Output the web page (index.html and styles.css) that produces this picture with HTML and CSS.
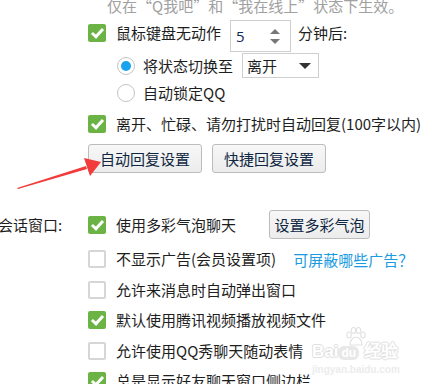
FILE: index.html
```html
<!DOCTYPE html>
<html lang="zh-CN">

<head>
    <meta charset="UTF-8">
    <meta name="viewport" content="width=device-width, initial-scale=1.0">
    <title>会话窗口设置</title>
    <link rel="stylesheet" href="styles.css">
</head>

<body>
    <div class="panel">
        <p class="note">仅在“Q我吧”和“我在线上”状态下生效。</p>

        <div class="group">
            <div class="row row-idle">
                <span class="check on"></span>
                <span class="label">鼠标键盘无动作</span>
                <div class="spin">
                    <span class="spin-value">5</span>
                    <span class="spin-arrows">
                        <span class="tri up"></span>
                        <span class="tri down"></span>
                    </span>
                </div>
                <span class="label after">分钟后:</span>
            </div>
            <div class="row row-radio first">
                <span class="radio on"></span>
                <span class="label">将状态切换至</span>
                <div class="select">
                    <span>离开</span>
                    <span class="tri down dark"></span>
                </div>
            </div>
            <div class="row row-radio second">
                <span class="radio"></span>
                <span class="label">自动锁定QQ</span>
            </div>
            <div class="row row-reply">
                <span class="check on"></span>
                <span class="label">离开、忙碌、请勿打扰时自动回复(100字以内)</span>
            </div>
            <div class="buttons">
                <button class="btn wide">自动回复设置</button>
                <button class="btn wide">快捷回复设置</button>
            </div>
        </div>

        <div class="section">
            <div class="section-title">会话窗口:</div>
            <div class="section-body">
                <div class="row row-head">
                    <span class="check on"></span>
                    <span class="label">使用多彩气泡聊天</span>
                    <button class="btn bubble">设置多彩气泡</button>
                </div>
                <div class="row item">
                    <span class="check"></span>
                    <span class="label">不显示广告(会员设置项)</span>
                    <a class="link" href="#">可屏蔽哪些广告？</a>
                </div>
                <div class="row item">
                    <span class="check"></span>
                    <span class="label">允许来消息时自动弹出窗口</span>
                </div>
                <div class="row item">
                    <span class="check on"></span>
                    <span class="label">默认使用腾讯视频播放视频文件</span>
                </div>
                <div class="row item">
                    <span class="check"></span>
                    <span class="label">允许使用QQ秀聊天随动表情</span>
                </div>
                <div class="row item">
                    <span class="check on"></span>
                    <span class="label">总是显示好友聊天窗口侧边栏</span>
                </div>
            </div>
        </div>

        <svg class="arrow" width="110" height="40" viewBox="0 0 110 40">
            <polygon points="17,34 86,12 87,15 18,35" fill="#f23c3c" />
            <polygon points="101,8 84,4 90,22" fill="#f23c3c" />
        </svg>

        <div class="watermark">
            <svg class="paw" width="24" height="20" viewBox="0 0 24 20">
                <g fill="none" stroke="#e2e2e2" stroke-width="1.2">
                    <ellipse cx="5" cy="8" rx="2.2" ry="3" />
                    <ellipse cx="9.5" cy="3.5" rx="2.2" ry="3" />
                    <ellipse cx="14.5" cy="3.5" rx="2.2" ry="3" />
                    <ellipse cx="19" cy="8" rx="2.2" ry="3" />
                    <path d="M6 18 C6 12 10 10 12 10 C14 10 18 12 18 18 Z" />
                </g>
            </svg>
            <div class="wm-logo">Bai<span class="wm-du">du</span> 经验</div>
            <div class="wm-url">jingyan.baidu.com</div>
        </div>
    </div>
</body>

</html>
```

FILE: styles.css
```css
body {
    margin: 0;
    padding: 0;
    background: #fff;
    font-family: "Noto Sans CJK SC", "Microsoft YaHei", sans-serif;
    font-size: 15px;
    color: #1e1e1e;
    overflow: hidden;
}

.panel {
    position: relative;
    width: 430px;
    height: 384px;
    overflow: hidden;
}

.note {
    margin: -2px 0 0 107px;
    height: 16px;
    line-height: 16px;
    color: #a0a0a0;
    font-size: 15px;
    white-space: nowrap;
}

.group {
    padding-left: 88px;
}

.row {
    display: flex;
    align-items: center;
    white-space: nowrap;
}

.label {
    line-height: 20px;
}

/* checkbox */
.check {
    flex: none;
    width: 14px;
    height: 14px;
    border: 2px solid #d6d6d6;
    border-radius: 2px;
    background: #fff;
    margin-right: 10px;
    position: relative;
}

.check.on {
    border-color: #6ab344;
    background: #6ab344;
}

.check.on::after {
    content: "";
    position: absolute;
    left: 4px;
    top: 0;
    width: 4px;
    height: 9px;
    border-right: 3px solid #fff;
    border-bottom: 3px solid #fff;
    transform: rotate(42deg);
}

/* radio */
.radio {
    flex: none;
    width: 16px;
    height: 16px;
    border: 1px solid #c4c4c4;
    border-radius: 50%;
    background: #fff;
    margin-right: 10px;
    position: relative;
}

.radio.on::after {
    content: "";
    position: absolute;
    left: 3px;
    top: 3px;
    width: 10px;
    height: 10px;
    border-radius: 50%;
    background: #17a3ee;
}

.row-idle {
    margin-top: 6px;
    align-items: flex-start;
    height: 32px;
}

.row-idle .check {
    margin-top: 4px;
}

.row-idle .label {
    line-height: 26px;
}

.label.after {
    margin-left: 7px;
}

/* spin box */
.spin {
    border: 1px solid #cfcfcf;
    margin-left: 9px;
    display: flex;
    align-items: center;
    justify-content: space-between;
    padding-left: 5px;
    box-sizing: border-box;
    width: 61px;
    height: 32px;
}

.spin-value {
    color: #102a55;
    font-family: "Open Sans", sans-serif;
    font-size: 15px;
}

.spin-arrows {
    display: flex;
    flex-direction: column;
    gap: 5px;
    margin-right: 10px;
    margin-top: 1px;
}

.tri {
    width: 0;
    height: 0;
    border-left: 5px solid transparent;
    border-right: 5px solid transparent;
}

.tri.up {
    border-bottom: 5px solid #777;
}

.tri.down {
    border-top: 5px solid #777;
}

.tri.dark {
    border-top-color: #333;
    border-left-width: 6px;
    border-right-width: 6px;
    border-top-width: 6px;
}

.row-radio {
    height: 25px;
    padding-left: 29px;
}

.row-radio.first {
    margin-top: 1px;
}

.row-radio.second {
    margin-top: 2px;
}

.row-radio .radio {
    margin-right: 8px;
}

/* select */
.select {
    margin-left: 9px;
    width: 77px;
    height: 25px;
    box-sizing: border-box;
    border: 1px solid #cfcfcf;
    display: flex;
    align-items: center;
    justify-content: space-between;
    padding: 0 7px 0 4px;
}

.row-reply {
    margin-top: 7px;
    height: 24px;
}

.buttons {
    display: flex;
    gap: 10px;
    margin-top: 8px;
}

.btn {
    font-family: "Noto Sans CJK SC", "Microsoft YaHei", sans-serif;
    font-size: 15px;
    color: #0f2742;
    background: linear-gradient(#f7f7f7, #ececec);
    border: 1px solid #bcbcbc;
    border-radius: 3px;
    height: 29px;
    padding: 0;
    cursor: pointer;
}

.btn.wide {
    width: 114px;
}

.btn.bubble {
    width: 101px;
    margin-left: 33px;
}

/* session section */
.section {
    display: flex;
    margin-top: 37px;
}

.section-title {
    width: 88px;
    flex: none;
    margin-left: -2px;
    height: 29px;
    line-height: 29px;
    margin-right: 2px;
}

.section-body {
    flex: 1;
}

.row-head {
    height: 29px;
}

.row.item {
    height: 30.5px;
}

.row-head + .item {
    margin-top: 5px;
}

.link {
    margin-left: 17px;
    color: #1a9be0;
    text-decoration: none;
}

/* overlays */
.arrow {
    position: absolute;
    left: 0;
    top: 154px;
}

.watermark {
    position: absolute;
    left: 312px;
    top: 327px;
    color: #fff;
    text-align: center;
    width: 90px;
}

.paw {
    display: block;
    margin-left: 32px;
    margin-bottom: -4px;
}

.wm-logo {
    font-family: "Liberation Sans", sans-serif;
    font-weight: bold;
    font-size: 17px;
    line-height: 18px;
    text-align: left;
    text-shadow: 1px 0 #e0e0e0, -1px 0 #e0e0e0, 0 1px #e0e0e0, 0 -1px #e0e0e0;
}

.wm-du {
    display: inline-block;
    font-size: 12px;
    line-height: 14px;
    padding: 0 3px;
    border-radius: 6px;
    background: #e8e8e8;
    text-shadow: none;
    color: #fff;
}

.wm-url {
    font-family: "Liberation Sans", sans-serif;
    font-size: 10px;
    font-weight: bold;
    color: #ececec;
    text-align: left;
    margin-top: 3px;
}
```
